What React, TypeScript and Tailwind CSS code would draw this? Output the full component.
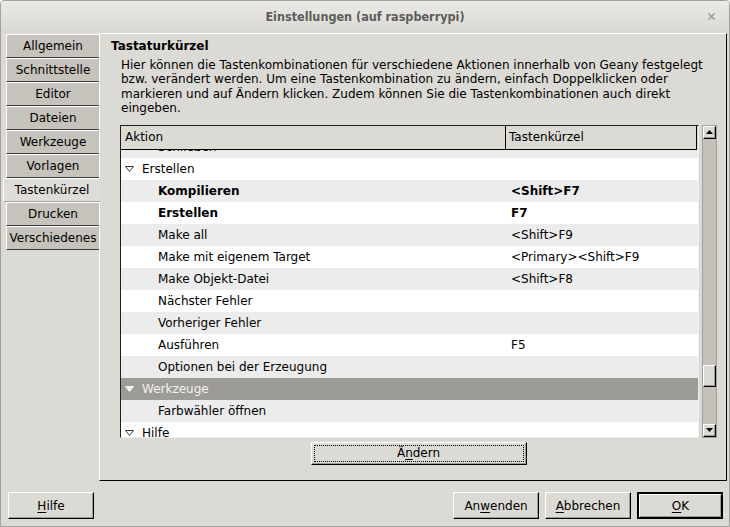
import React from "react";
import { X } from "lucide-react";

type Row = {
  label: string;
  shortcut?: string;
  category?: boolean;
  bold?: boolean;
  selected?: boolean;
};

const tabs = [
  "Allgemein",
  "Schnittstelle",
  "Editor",
  "Dateien",
  "Werkzeuge",
  "Vorlagen",
  "Tastenkürzel",
  "Drucken",
  "Verschiedenes",
];

const rows: Row[] = [
  { label: "Schließen" },
  { label: "Erstellen", category: true },
  { label: "Kompilieren", shortcut: "<Shift>F7", bold: true },
  { label: "Erstellen", shortcut: "F7", bold: true },
  { label: "Make all", shortcut: "<Shift>F9" },
  { label: "Make mit eigenem Target", shortcut: "<Primary><Shift>F9" },
  { label: "Make Objekt-Datei", shortcut: "<Shift>F8" },
  { label: "Nächster Fehler" },
  { label: "Vorheriger Fehler" },
  { label: "Ausführen", shortcut: "F5" },
  { label: "Optionen bei der Erzeugung" },
  { label: "Werkzeuge", category: true, selected: true },
  { label: "Farbwähler öffnen" },
  { label: "Hilfe", category: true },
];

const Expander = ({ light }: { light?: boolean }) => (
  <svg width="9" height="6" viewBox="0 0 9 6" className="shrink-0">
    <polygon
      points="0.5,0.5 8.5,0.5 4.5,5.5"
      fill={light ? "#f2f2f0" : "#ffffff"}
      stroke={light ? "#f2f2f0" : "#3c3c3c"}
      strokeWidth="1"
    />
  </svg>
);

const Arrow = ({ up }: { up?: boolean }) => (
  <svg width="7" height="4" viewBox="0 0 7 4">
    <polygon points={up ? "3.5,0 7,4 0,4" : "0,0 7,0 3.5,4"} fill="#000" />
  </svg>
);

const bevel =
  "bg-[#dcdad5] border border-t-white border-l-white border-b-black border-r-black shadow-[inset_-1px_-1px_0_#9d9b96]";

const DialogButton = ({
  children,
  isDefault,
}: {
  children: React.ReactNode;
  isDefault?: boolean;
}) =>
  isDefault ? (
    <div className="w-[86px] h-[27px] border-2 border-black bg-[#dcdad5]">
      <div className="w-full h-full flex items-center justify-center border-t border-l border-white shadow-[inset_-1px_-1px_0_#9d9b96]">
        {children}
      </div>
    </div>
  ) : (
    <div className={`w-[86px] h-[27px] flex items-center justify-center ${bevel}`}>
      {children}
    </div>
  );

export default function App() {
  return (
    <div
      className="w-[730px] h-[527px] bg-[#dcdad5] border border-[#a3a19d] rounded-t-[4px] flex flex-col overflow-hidden text-[12px] text-black"
      style={{ fontFamily: '"DejaVu Sans", sans-serif' }}
    >
      {/* Title bar */}
      <div className="h-[32px] shrink-0 relative flex items-center justify-center bg-gradient-to-b from-[#ebeae7] to-[#dad8d3]">
        <span
          className="font-bold text-[12.5px] text-[#5c5c5c]"
          style={{ fontFamily: '"DejaVu Sans Condensed", "DejaVu Sans", sans-serif' }}
        >
          Einstellungen (auf raspberrypi)
        </span>
        <X className="absolute right-[12px] top-[10px] text-[#9a9a9a]" size={11} strokeWidth={3} />
      </div>

      {/* Main area */}
      <div className="flex h-[448px] shrink-0">
        {/* Tabs */}
        <div className="w-[98px] pt-[1px] flex flex-col">
          {tabs.map((tab) =>
            tab === "Tastenkürzel" ? (
              <div
                key={tab}
                className="ml-[2px] h-[24px] flex items-center justify-center bg-[#dfddd8] border-t border-l border-white border-b border-b-[#a3a19d] -mr-[1px] relative z-10"
              >
                {tab}
              </div>
            ) : (
              <div
                key={tab}
                className="ml-[5px] h-[24px] flex items-center justify-center bg-[#c6c3bc] border-t border-l border-white border-b border-b-[#3c3c3c]"
              >
                {tab}
              </div>
            )
          )}
        </div>

        {/* Panel */}
        <div className="w-[628px] border border-t-white border-l-white border-r-black border-b-black pl-[11px] pt-[5px]">
          <h2 className="font-bold leading-[14px]">Tastaturkürzel</h2>
          <p className="mt-[5px] ml-[10px] leading-[14.4px] w-[600px]">
            Hier können die Tastenkombinationen für verschiedene Aktionen innerhalb von Geany festgelegt
            bzw. verändert werden. Um eine Tastenkombination zu ändern, einfach Doppelklicken oder
            markieren und auf Ändern klicken. Zudem können Sie die Tastenkombinationen auch direkt
            eingeben.
          </p>

          {/* Tree + scrollbar */}
          <div className="ml-[9px] mt-[9px] w-[597px] flex">
            <div className="w-[579px] h-[313px] border border-t-[#1e1e1e] border-l-[#1e1e1e] border-r-[#eeeeec] border-b-[#eeeeec] flex flex-col">
              <div className="h-[24px] flex bg-[#dcdad5] border-b border-black border-r border-r-black mr-[1px]">
                <div className="w-[385px] border-r border-black pl-[4px] flex items-center">Aktion</div>
                <div className="flex-1 pl-[3px] flex items-center">Tastenkürzel</div>
              </div>
              <div className="h-[287px] overflow-hidden bg-white">
                <div className="-mt-[14px]">
                  {rows.map((row, i) => {
                    const bg = row.selected
                      ? "bg-[#9d9b96] text-[#f2f2f0]"
                      : i % 2 === 0
                      ? "bg-[#ececec]"
                      : "bg-white";
                    return (
                      <div key={i} className={`h-[22px] flex items-center ${bg} ${row.bold ? "font-bold" : ""}`}>
                        <div className="w-[385px] flex items-center">
                          {row.category ? (
                            <>
                              <span className="ml-[4px]">
                                <Expander light={row.selected} />
                              </span>
                              <span className="ml-[8px]">{row.label}</span>
                            </>
                          ) : (
                            <span className="pl-[37px]">{row.label}</span>
                          )}
                        </div>
                        <div className="pl-[5px]">{row.shortcut}</div>
                      </div>
                    );
                  })}
                </div>
              </div>
            </div>

            {/* Scrollbar */}
            <div className="ml-[3px] w-[15px] h-[313px] bg-[#c4c1ba] border border-[#a3a19d] flex flex-col">
              <div className={`h-[13px] flex items-center justify-center ${bevel}`}>
                <Arrow up />
              </div>
              <div className={`mt-[226px] h-[22px] ${bevel}`} />
              <div className="flex-1" />
              <div className={`h-[13px] flex items-center justify-center ${bevel}`}>
                <Arrow />
              </div>
            </div>
          </div>

          <div className="ml-[9px] w-[597px] mt-[4px] flex justify-center">
            <div className={`w-[216px] h-[23px] p-[2px] ${bevel}`}>
              <div className="w-full h-full border border-dotted border-black flex items-center justify-center">
                Ä<u className="underline-offset-2">n</u>dern
              </div>
            </div>
          </div>
        </div>
      </div>

      {/* Bottom buttons */}
      <div className="flex-1 flex items-start pt-[11px] pl-[7px] pr-[6px]">
        <DialogButton>
          <u className="underline-offset-2">H</u>ilfe
        </DialogButton>
        <div className="ml-auto flex gap-[6px]">
          <DialogButton>
            An<u className="underline-offset-2">w</u>enden
          </DialogButton>
          <DialogButton>
            <u className="underline-offset-2">A</u>bbrechen
          </DialogButton>
          <DialogButton isDefault>
            <u className="underline-offset-2">O</u>K
          </DialogButton>
        </div>
      </div>
    </div>
  );
}
